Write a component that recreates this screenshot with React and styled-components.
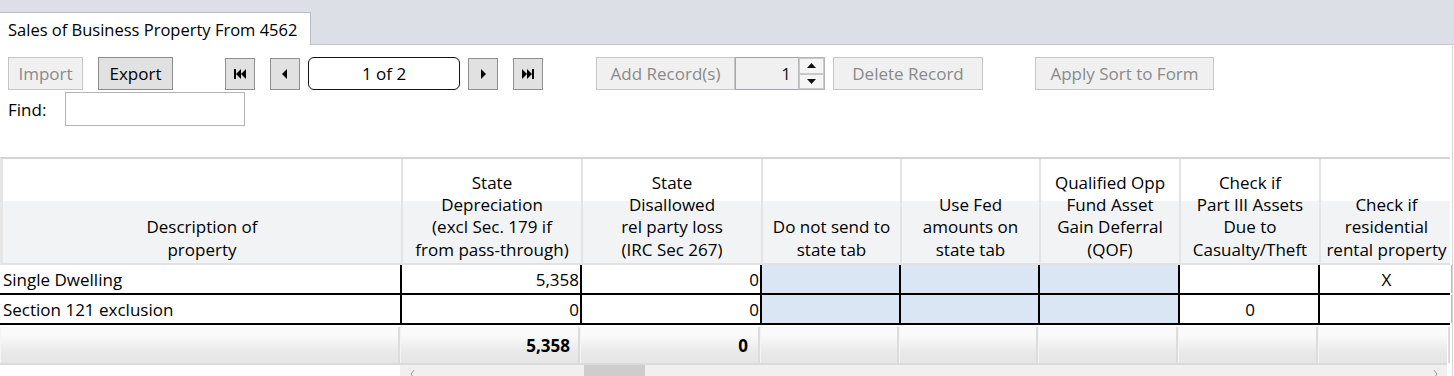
import React from "react";
import styled, { createGlobalStyle } from "styled-components";

const Global = createGlobalStyle`
  html, body { margin: 0; padding: 0; background: #fff; }
  body { font-family: "Open Sans", "Noto Sans", sans-serif; color: #000; }
`;

const FS = "17px";

const Page = styled.div`
  width: 1454px;
  height: 376px;
  overflow: hidden;
  background: #fff;
  display: flex;
  flex-direction: column;
`;

const TabStrip = styled.div`
  height: 45px;
  box-sizing: border-box;
  background: #dcdfe6;
  border-bottom: 1px solid #c3c6cc;
  display: flex;
  align-items: flex-end;
  padding-top: 12px;
`;

const Tab = styled.div`
  height: 33px;
  box-sizing: border-box;
  margin-bottom: -1px;
  background: #fff;
  border: 1px solid #b8bcc3;
  border-left: none;
  border-bottom: none;
  padding: 0 6px 0 8px;
  display: flex;
  align-items: center;
  font-size: 16.5px;
  width: 311px;
  white-space: nowrap;
`;

const Content = styled.div`
  flex: 1;
  border-right: 1px solid #d3d3d3;
  margin-right: 1px;
  display: flex;
  flex-direction: column;
  padding-top: 12px;
`;

const Toolbar = styled.div`
  display: flex;
  align-items: center;
  padding-left: 8px;
  height: 33px;
`;

const Button = styled.button`
  height: 33px;
  width: ${(p) => p.$w}px;
  margin-left: ${(p) => p.$ml || 0}px;
  box-sizing: border-box;
  font-family: inherit;
  font-size: ${FS};
  padding: 0;
  display: flex;
  align-items: center;
  justify-content: center;
  background: ${(p) => (p.disabled ? "#f0f0f0" : "#e1e1e1")};
  border: 1px solid ${(p) => (p.disabled ? "#c6c6c6" : "#8c8c8c")};
  color: ${(p) => (p.disabled ? "#8a8a8a" : "#000")};
  border-radius: 0;
  white-space: nowrap;
`;

const NavButton = styled(Button)`
  width: 30px;
  height: 32px;
  border-color: #8f8f8f;
`;

const PageBox = styled.div`
  width: 152px;
  height: 33px;
  box-sizing: border-box;
  margin-left: 8px;
  border: 1.5px solid #111;
  border-radius: 6px;
  display: flex;
  align-items: center;
  justify-content: center;
  font-size: ${FS};
`;

const Spinner = styled.div`
  display: flex;
  height: 33px;
  width: 90px;
`;

const SpinInput = styled.div`
  flex: 1;
  box-sizing: border-box;
  background: #f0f0f0;
  border: 1px solid #9ea6b4;
  border-right: none;
  display: flex;
  align-items: center;
  justify-content: flex-end;
  padding-right: 7px;
  font-size: ${FS};
  color: #1a1a1a;
`;

const SpinArrows = styled.div`
  width: 27px;
  box-sizing: border-box;
  border: 1px solid #b5b5b5;
  display: flex;
  flex-direction: column;
  background: #f0f0f0;
`;

const SpinArrow = styled.div`
  flex: 1;
  display: flex;
  align-items: center;
  justify-content: center;
  border: 1px solid #c9c9c9;
  background: #f5f5f5;
`;

const FindRow = styled.div`
  display: flex;
  align-items: center;
  padding-left: 8px;
  margin-top: 2px;
  height: 34px;
`;

const FindLabel = styled.span`
  font-size: ${FS};
  width: 57px;
`;

const FindInput = styled.div`
  width: 180px;
  height: 34px;
  box-sizing: border-box;
  border: 1px solid #b4b4b4;
  background: #fff;
`;

const Grid = styled.div`
  margin-top: 31px;
  width: 1450px;
  display: flex;
  flex-direction: column;
`;

const COLS = "400px 180px 180px 139px 139px 140px 140px 132px";

const HeaderRow = styled.div`
  display: grid;
  grid-template-columns: ${COLS};
  height: 108px;
  box-sizing: border-box;
  border-top: 2px solid #d4d4d4;
  border-bottom: 2px solid #e2e2e2;
  border-left: 3px solid #e6e6e6;
  background: linear-gradient(to bottom, #fff 0, #fff 42px, #f2f3f5 42px, #f2f3f5 100%);
`;

const HeaderCell = styled.div`
  border-right: 2px solid #e4e4e4;
  display: flex;
  align-items: flex-end;
  justify-content: center;
  text-align: center;
  font-size: ${FS};
  line-height: 22.3px;
  padding-bottom: 2px;
  white-space: pre-line;
  &:last-child { border-right: 1px solid #d8d8d8; }
`;

const DataRow = styled.div`
  display: grid;
  grid-template-columns: ${COLS};
  height: 30px;
  box-sizing: border-box;
  border-left: 2px solid #000;
  border-bottom: 2px solid #000;
  & > div:first-child { margin-left: -2px; }
`;

const Cell = styled.div`
  border-right: ${(p) => (p.$last ? "1px solid #bbb" : "2px solid #000")};
  background: ${(p) => (p.$blue ? "#dae6f3" : "#fff")};
  display: flex;
  align-items: center;
  justify-content: ${(p) => (p.$align === "right" ? "flex-end" : p.$align === "center" ? "center" : "flex-start")};
  padding: 0 1px 0 3px;
  font-size: ${FS};
  overflow: hidden;
  white-space: nowrap;
`;

const TotalRow = styled.div`
  display: grid;
  grid-template-columns: ${COLS};
  height: 38px;
  margin-top: 2px;
  width: 1447px;
  box-sizing: border-box;
  border-bottom: 2px solid #dadada;
  background: linear-gradient(to bottom, #fafafa 0, #fafafa 8px, #e8e8e8 26px, #e6e6e6 100%);
`;

const TotalCell = styled.div`
  border-right: 2px solid #dcdcdc;
  border-left: 1px solid #f4f4f4;
  display: flex;
  align-items: center;
  justify-content: flex-end;
  padding-right: ${(p) => p.$pr || 8}px;
  font-size: ${FS};
  font-weight: 700;
`;

const ScrollRow = styled.div`
  display: flex;
  height: 12px;
`;

const ScrollSpacer = styled.div`
  width: 400px;
`;

const ScrollTrack = styled.div`
  width: 1047px;
  background: #f0f0f0;
  display: flex;
  align-items: flex-start;
`;

const ScrollArrow = styled.div`
  width: 24px;
  height: 12px;
  display: flex;
  justify-content: center;
  padding-top: 5px;
  box-sizing: border-box;
`;

const ScrollThumb = styled.div`
  margin-left: 160px;
  width: 61px;
  height: 12px;
  background: #cdcdcd;
`;

const Fill = styled.div`
  flex: 1;
`;

const Icon = ({ type }) => {
  const f = "#000";
  if (type === "first")
    return (
      <svg width="12" height="10" viewBox="0 0 12 10">
        <rect x="0" y="0" width="2" height="10" fill={f} />
        <polygon points="2,5 7,0 7,10" fill={f} />
        <polygon points="7,5 12,0 12,10" fill={f} />
      </svg>
    );
  if (type === "last")
    return (
      <svg width="12" height="10" viewBox="0 0 12 10">
        <polygon points="0,0 5,5 0,10" fill={f} />
        <polygon points="5,0 10,5 5,10" fill={f} />
        <rect x="10" y="0" width="2" height="10" fill={f} />
      </svg>
    );
  if (type === "prev")
    return (
      <svg width="6" height="10" viewBox="0 0 6 10">
        <polygon points="0,5 5,0 5,10" fill={f} />
      </svg>
    );
  return (
    <svg width="6" height="10" viewBox="0 0 6 10">
      <polygon points="1,0 6,5 1,10" fill={f} />
    </svg>
  );
};

const Tri = ({ up }) => (
  <svg width="9" height="5" viewBox="0 0 9 5">
    <polygon points={up ? "0,5 4.5,0 9,5" : "0,0 4.5,5 9,0"} fill="#111" />
  </svg>
);

const Chevron = ({ left }) => (
  <svg width="5" height="8" viewBox="0 0 5 8">
    <polyline
      points={left ? "4,0 1,4 4,8" : "1,0 4,4 1,8"}
      fill="none"
      stroke="#9a9a9a"
      strokeWidth="1"
    />
  </svg>
);

const headers = [
  "Description of\nproperty",
  "State\nDepreciation\n(excl Sec. 179 if\nfrom pass-through)",
  "State\nDisallowed\nrel party loss\n(IRC Sec 267)",
  "Do not send to\nstate tab",
  "Use Fed\namounts on\nstate tab",
  "Qualified Opp\nFund Asset\nGain Deferral\n(QOF)",
  "Check if\nPart III Assets\nDue to\nCasualty/Theft",
  "Check if\nresidential\nrental property",
];

const rows = [
  ["Single Dwelling", "5,358", "0", "", "", "", "", "X"],
  ["Section 121 exclusion", "0", "0", "", "", "", "0", ""],
];

const aligns = ["left", "right", "right", "center", "center", "center", "center", "center"];

export default function App() {
  return (
    <Page>
      <Global />
      <TabStrip>
        <Tab>Sales of Business Property From 4562</Tab>
      </TabStrip>
      <Content>
        <Toolbar>
          <Button $w={75} disabled>Import</Button>
          <Button $w={75} $ml={15}>Export</Button>
          <NavButton $ml={52}><Icon type="first" /></NavButton>
          <NavButton $ml={15}><Icon type="prev" /></NavButton>
          <PageBox>1 of 2</PageBox>
          <NavButton $ml={8}><Icon type="next" /></NavButton>
          <NavButton $ml={15}><Icon type="last" /></NavButton>
          <Button $w={139} $ml={53} disabled>Add Record(s)</Button>
          <Spinner>
            <SpinInput>1</SpinInput>
            <SpinArrows>
              <SpinArrow><Tri up /></SpinArrow>
              <SpinArrow><Tri /></SpinArrow>
            </SpinArrows>
          </Spinner>
          <Button $w={150} $ml={8} disabled>Delete Record</Button>
          <Button $w={179} $ml={52} disabled>Apply Sort to Form</Button>
        </Toolbar>
        <FindRow>
          <FindLabel>Find:</FindLabel>
          <FindInput />
        </FindRow>
        <Grid>
          <HeaderRow>
            {headers.map((h, i) => (
              <HeaderCell key={i}>{h}</HeaderCell>
            ))}
          </HeaderRow>
          {rows.map((r, ri) => (
            <DataRow key={ri}>
              {r.map((v, ci) => (
                <Cell
                  key={ci}
                  $align={aligns[ci]}
                  $blue={ci >= 3 && ci <= 5}
                  $last={ci === 7}
                >
                  {v}
                </Cell>
              ))}
            </DataRow>
          ))}
          <TotalRow>
            <TotalCell />
            <TotalCell>5,358</TotalCell>
            <TotalCell $pr={10}>0</TotalCell>
            <TotalCell />
            <TotalCell />
            <TotalCell />
            <TotalCell />
            <TotalCell />
          </TotalRow>
          <ScrollRow>
            <ScrollSpacer />
            <ScrollTrack>
              <ScrollArrow><Chevron left /></ScrollArrow>
              <ScrollThumb />
              <Fill />
              <ScrollArrow><Chevron /></ScrollArrow>
            </ScrollTrack>
          </ScrollRow>
        </Grid>
      </Content>
    </Page>
  );
}
